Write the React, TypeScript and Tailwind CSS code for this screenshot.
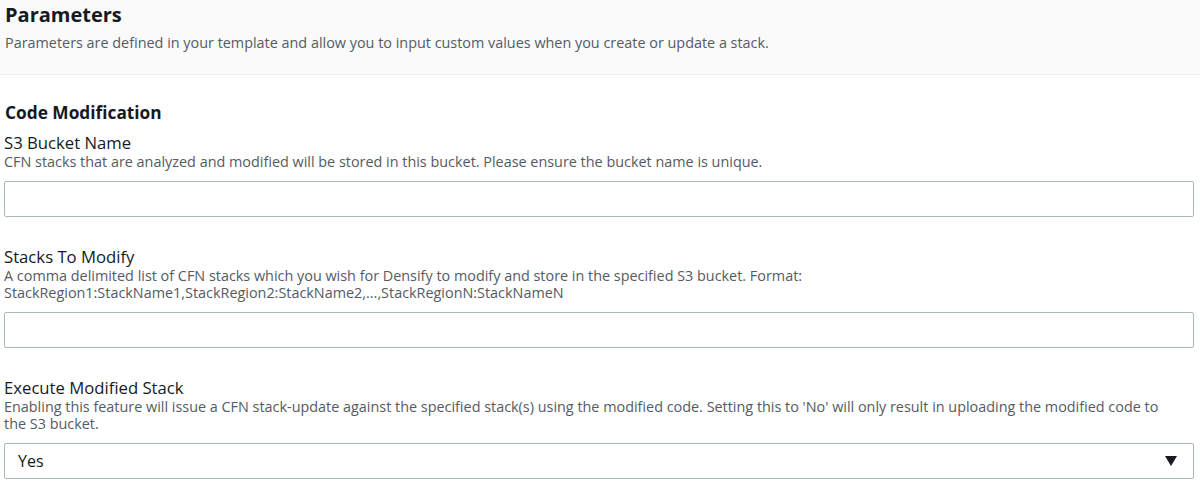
import React from "react";

const font = { fontFamily: '"Open Sans", "Noto Sans", sans-serif' };

function Field({ label, desc, children }: { label: string; desc: React.ReactNode; children: React.ReactNode }) {
  return (
    <div className="flex flex-col">
      <div className="text-[16.7px] leading-[20px] text-[#16191f]">{label}</div>
      <div className="text-[14.4px] leading-[17px] text-[#545b64]">{desc}</div>
      <div className="mt-[11px]">{children}</div>
    </div>
  );
}

function TextInput() {
  return <div className="h-[36px] w-full rounded-[2px] border border-[#aab7b8] bg-white" />;
}

export default function App() {
  return (
    <div style={font} className="w-[1200px] h-[484px] overflow-hidden bg-white">
      <div className="h-[75px] bg-[#fafafa] border-b border-[#eaeded] px-[5px] pt-[1px]">
        <div className="text-[20px] leading-[28px] font-bold text-[#16191f]">Parameters</div>
        <div className="text-[14.4px] leading-[18px] text-[#545b64] mt-[5px]">
          Parameters are defined in your template and allow you to input custom values when you create or update a stack.
        </div>
      </div>
      <div className="pl-[4px] pr-[6px] pt-[26px] flex flex-col">
        <div className="pl-[1px] text-[17.3px] leading-[24px] font-bold text-[#16191f]">Code Modification</div>
        <div className="flex flex-col gap-[30px] mt-[8px]">
          <Field
            label="S3 Bucket Name"
            desc="CFN stacks that are analyzed and modified will be stored in this bucket. Please ensure the bucket name is unique."
          >
            <TextInput />
          </Field>
          <Field
            label="Stacks To Modify"
            desc={
              <>
                A comma delimited list of CFN stacks which you wish for Densify to modify and store in the specified S3 bucket. Format:
                <br />
                StackRegion1:StackName1,StackRegion2:StackName2,...,StackRegionN:StackNameN
              </>
            }
          >
            <TextInput />
          </Field>
          <Field
            label="Execute Modified Stack"
            desc={
              <>
                Enabling this feature will issue a CFN stack-update against the specified stack(s) using the modified code. Setting this to 'No' will only result in uploading the modified code to
                <br />
                the S3 bucket.
              </>
            }
          >
            <div className="h-[36px] w-full rounded-[2px] border border-[#aab7b8] bg-white flex items-center justify-between pl-[13px] pr-[16px]">
              <span className="text-[16px] text-[#16191f]">Yes</span>
              <svg width="12" height="10" viewBox="0 0 12 10">
                <path d="M0 0 H12 L6 10 Z" fill="#16191f" />
              </svg>
            </div>
          </Field>
        </div>
      </div>
    </div>
  );
}
